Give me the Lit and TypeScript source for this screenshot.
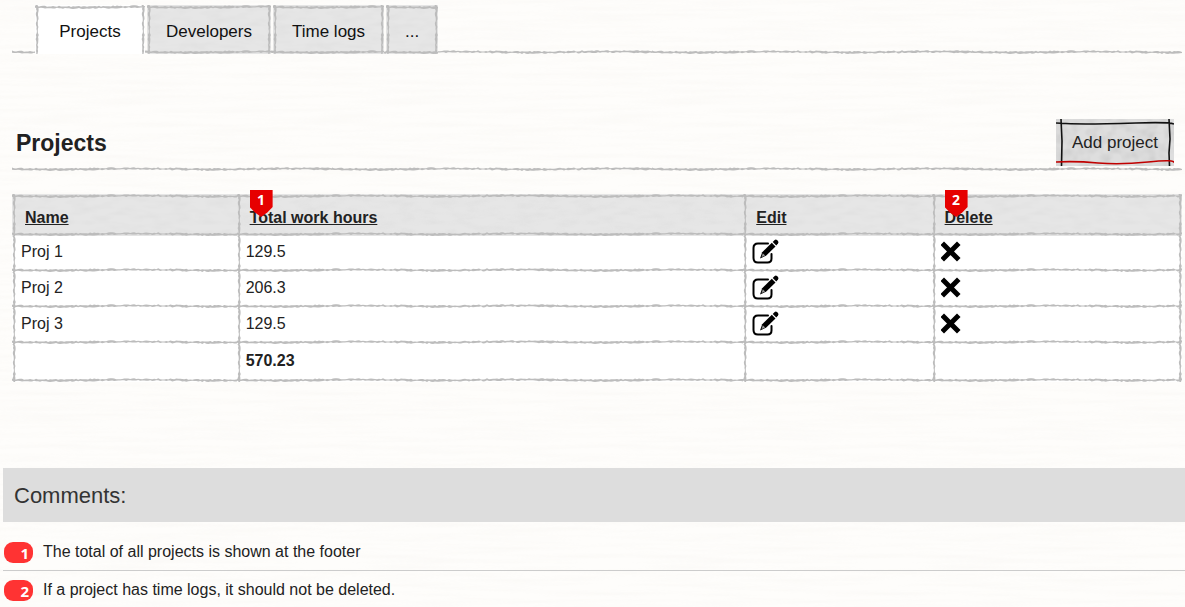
import { LitElement, html, css, svg, unsafeCSS } from "lit";
import { customElement, state } from "lit/decorators.js";

// ---- hand-drawn strokes and paper, generated as vector tiles ----

const toUrl = (markup: string) => unsafeCSS(`url("data:image/svg+xml,${encodeURIComponent(markup)}")`);

function noise(seed: number) {
  let s = seed;
  return () => {
    s = (s * 16807) % 2147483647;
    return s / 2147483647;
  };
}

/** A chalky stroke that repeats along its length; the tile is 4px thick. */
function roughStroke(length: number, vertical: boolean, seed: number) {
  const rnd = noise(seed);
  const upper: number[][] = [];
  const lower: number[][] = [];
  for (let i = 0; i <= length; i += 2) {
    const drift = Math.sin((i / length) * Math.PI * 4) * 0.4;
    upper.push([i, 1 + drift + (rnd() - 0.5) * 1.2]);
    lower.unshift([i, 3 + drift + (rnd() - 0.5) * 1.2]);
  }
  const points = [...upper, ...lower]
    .map(([a, b]) => (vertical ? `${b.toFixed(2)},${a}` : `${a},${b.toFixed(2)}`))
    .join(" ");
  const w = vertical ? 4 : length;
  const h = vertical ? length : 4;
  return toUrl(
    `<svg xmlns="http://www.w3.org/2000/svg" width="${w}" height="${h}"><polygon points="${points}" fill="#bcbcbc"/></svg>`
  );
}

function paper(freq: string, matrix: string) {
  return toUrl(
    `<svg xmlns="http://www.w3.org/2000/svg" width="280" height="200"><filter id="n" x="0" y="0" width="100%" height="100%"><feTurbulence type="fractalNoise" baseFrequency="${freq}" numOctaves="2" stitchTiles="stitch"/><feColorMatrix values="${matrix}"/></filter><rect width="280" height="200" filter="url(#n)"/></svg>`
  );
}

const strokeH = roughStroke(320, false, 71);
const strokeV = roughStroke(160, true, 913);
const pagePaper = paper("0.012 0.22", "0 0 0 0 0.62  0 0 0 0 0.58  0 0 0 0 0.52  0.12 0 0 0 -0.045");
const greyPaper = paper("0.05 0.16", "0 0 0 0 0.5  0 0 0 0 0.5  0 0 0 0 0.5  0.25 0 0 0 -0.1");
const buttonPaper = paper("0.09 0.1", "0 0 0 0 0.4  0 0 0 0 0.4  0 0 0 0 0.4  0.6 0 0 0 -0.22");

interface Project {
  name: string;
  hours: string;
}

const editIcon = svg`
  <path d="M16 4.500H6Q1.500 4.500 1.500 9V19Q1.500 23.500 6 23.500H15.500Q19.500 23.500 19.500 19.500V15" fill="none" stroke="#000" stroke-width="2" stroke-linecap="round"/>
  <path d="M8 19.500L10.200 13.200L19.800 3.800L23.500 7.400L14 16.800Z" fill="#000"/>
  <path d="M20.700 2.900L22.700 1Q23.800 0 25 1.100L26 2.100Q27 3.200 26 4.400L24.300 6.400Z" fill="#000"/>
  <path d="M10.800 14.300L13.200 16.500L9.600 18Z" fill="#999"/>`;

const deleteIcon = svg`
  <path d="M3 4L16 17M16 4L3 17" fill="none" stroke="#000" stroke-width="5" stroke-linecap="square" stroke-linejoin="round"/>`;

@customElement("app-root")
export class AppRoot extends LitElement {
  @state() private active = "Projects";

  private tabs = ["Projects", "Developers", "Time logs", "..."];

  private projects: Project[] = [
    { name: "Proj 1", hours: "129.5" },
    { name: "Proj 2", hours: "206.3" },
    { name: "Proj 3", hours: "129.5" },
  ];

  private comments = [
    "The total of all projects is shown at the footer",
    "If a project has time logs, it should not be deleted.",
  ];

  static styles = css`
    :host {
      --h: ${strokeH};
      --v: ${strokeV};
      display: block;
      box-sizing: border-box;
      min-height: 100vh;
      padding: 5px 0 0 3px;
      background: ${pagePaper} #fefdfb;
      color: #222;
      font: 16px/20px "Liberation Sans", sans-serif;
    }
    *, *::before, *::after { box-sizing: border-box; }
    button { font: inherit; color: inherit; cursor: pointer; }
    main { padding: 0 3px 0 9px; }
    .tabs {
      display: flex;
      height: 49px;
      padding-left: 23px;
      background: var(--h) 0 100% / auto 4px repeat-x;
    }
    .tab {
      border: 0;
      margin: 0;
      padding: 4px 19px 0;
      font-size: 17px;
      color: #111;
      background:
        var(--h) 0 0 repeat-x,
        var(--h) 0 100% repeat-x,
        var(--v) 0 0 repeat-y,
        var(--v) 100% 0 repeat-y,
        ${greyPaper} #e6e6e6;
    }
    .tab + .tab { margin-left: 2px; }
    .tab:first-child { min-width: 110px; }
    .tab.active {
      background:
        var(--h) 0 0 repeat-x,
        var(--v) 0 0 repeat-y,
        var(--v) 100% 0 repeat-y,
        #fff;
    }
    .title {
      display: flex;
      align-items: center;
      justify-content: space-between;
      margin-top: 65px;
      padding: 0 8px 5px 4px;
      background: var(--h) 0 100% repeat-x;
    }
    h1 { margin: 0; font-size: 23px; line-height: 28px; }
    .add {
      position: relative;
      height: 47px;
      padding: 0 16px;
      border: 0;
      font-size: 17px;
      background: ${buttonPaper} #dedede;
    }
    .add svg { position: absolute; inset: 0; width: 100%; height: 100%; }
    table {
      width: 100%;
      margin-top: 23px;
      border-collapse: collapse;
      table-layout: fixed;
    }
    .c-name { width: 19.2%; }
    .c-hours { width: 43.3%; }
    .c-edit { width: 16.1%; }
    th, td {
      height: 36px;
      padding: 0 9px 4px;
      text-align: left;
      background: var(--h) 0 100% repeat-x, var(--v) 0 0 repeat-y, #fff;
    }
    td:last-child {
      background: var(--h) 0 100% repeat-x, var(--v) 0 0 repeat-y, var(--v) 100% 0 repeat-y, #fff;
    }
    th {
      height: 42px;
      padding: 6px 13px 0;
      background: var(--h) 0 0 repeat-x, var(--h) 0 100% repeat-x, var(--v) 0 0 repeat-y, ${greyPaper} #e6e6e6;
    }
    th:last-child {
      background: var(--h) 0 0 repeat-x, var(--h) 0 100% repeat-x, var(--v) 0 0 repeat-y, var(--v) 100% 0 repeat-y, ${greyPaper} #e6e6e6;
    }
    th a { position: relative; color: inherit; }
    tfoot td { height: 38px; font-weight: bold; }
    .icon { display: block; padding: 0; border: 0; background: none; }
    .icon svg { display: block; }
    .marker {
      position: absolute;
      left: 0;
      bottom: 9px;
      width: 23px;
      height: 27px;
      clip-path: polygon(0 0, 100% 0, 100% 63%, 78% 82%, 50% 100%, 22% 82%, 0 63%);
      background: #e60000;
      color: #fff;
      font: bold 14px/20px "Open Sans", sans-serif;
      text-align: center;
    }
    .comments { margin-top: 86px; }
    h2 {
      margin: 0;
      padding: 15px 11px 13px;
      background: #ddd;
      color: #333;
      font-size: 22px;
      line-height: 26px;
      font-weight: normal;
    }
    ol { margin: 0; padding: 11px 0 0; list-style: none; }
    li {
      display: flex;
      align-items: center;
      gap: 10px;
      height: 38px;
      padding: 1px 0 0 1px;
      border-bottom: 1px solid #ccc;
    }
    .badge {
      width: 29px;
      height: 21px;
      padding-right: 4px;
      border-radius: 9px;
      background: #f33;
      color: #fff;
      font: bold 15px/22px "Open Sans", sans-serif;
      text-align: right;
    }
  `;

  private heading(label: string, note?: number) {
    return html`<th scope="col"><a href="#">${label}${note ? html`<span class="marker">${note}</span>` : ""}</a></th>`;
  }

  render() {
    return html`
      <main>
        <nav class="tabs" role="tablist">
          ${this.tabs.map(
            (t) => html`<button
              class="tab ${t === this.active ? "active" : ""}"
              role="tab"
              aria-selected=${t === this.active}
              @click=${() => (this.active = t)}
            >${t}</button>`
          )}
        </nav>
        <div class="title">
          <h1>Projects</h1>
          <button class="add">
            Add project
            <svg viewBox="0 0 118 47" preserveAspectRatio="none" fill="none" stroke="#111" stroke-width="1.600" aria-hidden="true">
              <path d="M0 4Q14 5 30 5T80 4T118 5M5 0L6 22L5.500 47M113 0L114 20L113 34L113.500 47" />
              <path d="M0 43Q20 42 42 44T92 43T118 44" stroke="#c00000" />
            </svg>
          </button>
        </div>
        <table>
          <colgroup><col class="c-name" /><col class="c-hours" /><col class="c-edit" /><col /></colgroup>
          <thead>
            <tr>${this.heading("Name")}${this.heading("Total work hours", 1)}${this.heading("Edit")}${this.heading("Delete", 2)}</tr>
          </thead>
          <tbody>
            ${this.projects.map(
              (p) => html`<tr>
                <td>${p.name}</td>
                <td>${p.hours}</td>
                <td><button class="icon" aria-label="Edit ${p.name}"><svg width="28" height="26" viewBox="0 0 28 26">${editIcon}</svg></button></td>
                <td><button class="icon" aria-label="Delete ${p.name}"><svg width="22" height="22" viewBox="0 0 22 22">${deleteIcon}</svg></button></td>
              </tr>`
            )}
          </tbody>
          <tfoot>
            <tr><td></td><td>570.23</td><td></td><td></td></tr>
          </tfoot>
        </table>
      </main>
      <section class="comments">
        <h2>Comments:</h2>
        <ol>
          ${this.comments.map((c, i) => html`<li><span class="badge">${i + 1}</span><span>${c}</span></li>`)}
        </ol>
      </section>
    `;
  }
}
